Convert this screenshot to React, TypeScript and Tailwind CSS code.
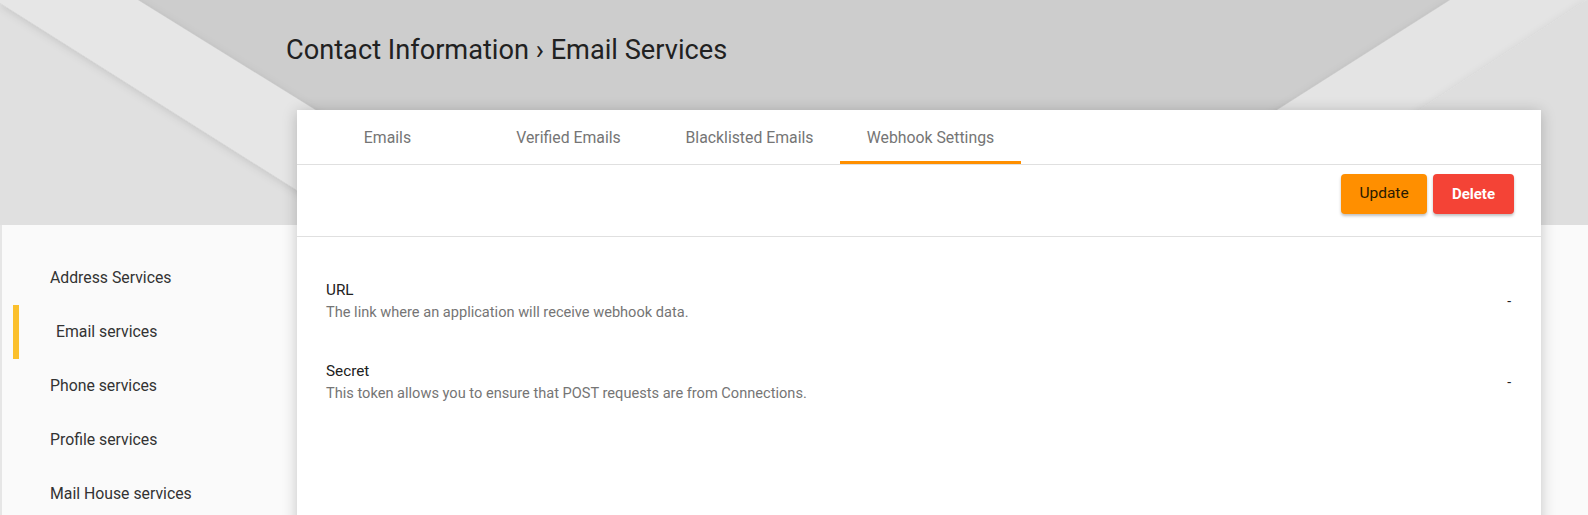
import React from "react"

const tabs = ["Emails", "Verified Emails", "Blacklisted Emails", "Webhook Settings"]
const sideItems = ["Address Services", "Email services", "Phone services", "Profile services", "Mail House services"]

const rows = [
  { label: "URL", desc: "The link where an application will receive webhook data." },
  { label: "Secret", desc: "This token allows you to ensure that POST requests are from Connections." },
]

function HeaderArt() {
  return (
    <svg className="absolute inset-0 w-full h-full" viewBox="0 0 1588 225" preserveAspectRatio="none">
      <defs>
        <filter id="soft" x="-20%" y="-20%" width="140%" height="140%">
          <feDropShadow dx="0" dy="2" stdDeviation="4" floodColor="#000" floodOpacity="0.12" />
        </filter>
      </defs>
      <rect width="1588" height="225" fill="#cdcdcd" />
      {/* left stripes */}
      <polygon points="0,3 352,225 0,225" fill="#e0e0e0" />
      <polygon points="0,0 138,0 501,225 352,225 0,3" fill="#e6e6e6" filter="url(#soft)" />
      {/* right stripes */}
      <polygon points="1450,0 1588,0 1588,225 1096,225" fill="#e4e4e4" filter="url(#soft)" />
      <polygon points="1587,0 1588,0 1588,225 1245,225" fill="#dedede" filter="url(#soft)" />
    </svg>
  )
}

export default function App() {
  return (
    <div className="relative min-h-[515px] bg-[#fafafa] overflow-hidden" style={{ fontFamily: "Roboto, 'Liberation Sans', sans-serif" }}>
      {/* Header background */}
      <div className="absolute top-0 left-0 right-0 h-[225px]">
        <HeaderArt />
      </div>

      <div className="relative">
        {/* Title */}
        <div className="h-[110px] pl-[286px] pt-[33px]">
          <h1 className="text-[27.2px] leading-[34px] text-[#212121] font-normal">
            Contact Information › Email Services
          </h1>
        </div>

        <div className="flex">
          {/* Sidebar */}
          <div className="w-[297px] mt-[115px] border-l-2 border-[#e6e6e6] pt-[26px]">
            {sideItems.map((item, i) => (
              <div
                key={item}
                className={
                  i === 1
                    ? "ml-[11px] h-[54px] flex items-center pl-[37px] border-l-[6px] border-[#fbc02d] text-[15.8px] text-[#333333]"
                    : "ml-[11px] h-[54px] flex items-center pl-[37px] text-[15.8px] text-[#333333]"
                }
              >
                {item}
              </div>
            ))}
          </div>

          {/* Card */}
          <div className="w-[1244px] bg-white shadow-[0_2px_14px_rgba(0,0,0,0.22)] min-h-[420px]">
            <div className="flex h-[55px] border-b border-[#e0e0e0]">
              {tabs.map((t, i) => (
                <div
                  key={t}
                  className={
                    i === 3
                      ? "w-[181px] flex items-center justify-center text-[15.8px] text-[#757575] border-b-[3px] border-[#ff8f00] pt-[4px]"
                      : "w-[181px] flex items-center justify-center text-[15.8px] text-[#757575] pt-[1px]"
                  }
                >
                  {t}
                </div>
              ))}
            </div>

            <div className="flex justify-end gap-[6px] h-[72px] pt-[9px] pr-[27px] border-b border-[#e0e0e0]">
              <button className="w-[86px] h-[40px] rounded-[4px] bg-[#ff8f00] text-[15.5px] font-normal text-[#2a1a00] shadow-[0_2px_3px_rgba(0,0,0,0.25)]">
                Update
              </button>
              <button className="w-[81px] h-[40px] rounded-[4px] bg-[#f44336] text-[15px] font-bold text-white shadow-[0_2px_3px_rgba(0,0,0,0.25)]">
                Delete
              </button>
            </div>

            <div className="pt-[42px] pl-[29px] pr-[30px] flex flex-col gap-[37px]">
              {rows.map((r) => (
                <div key={r.label} className="flex items-center justify-between">
                  <div>
                    <div className="text-[15.3px] leading-[22px] text-[#212121]">{r.label}</div>
                    <div className="text-[14.6px] leading-[22px] text-[#757575]">{r.desc}</div>
                  </div>
                  <div className="text-[14px] text-[#212121]">-</div>
                </div>
              ))}
            </div>
          </div>
        </div>
      </div>
    </div>
  )
}
